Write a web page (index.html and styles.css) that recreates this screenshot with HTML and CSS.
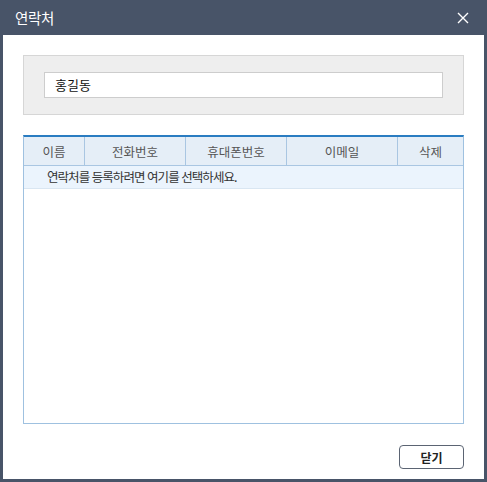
FILE: index.html
```html
<!DOCTYPE html>
<html lang="ko">
<head>
<meta charset="utf-8">
<title>연락처</title>
<link rel="stylesheet" href="styles.css">
</head>
<body>
<div class="window">
  <div class="titlebar">
    <span class="title">연락처</span>
    <svg class="close" width="12" height="12" viewBox="0 0 12 12"><path d="M1 1 L11 11 M11 1 L1 11" stroke="#ffffff" stroke-width="1.4" fill="none"/></svg>
  </div>
  <div class="content">
    <div class="search">
      <div class="input">홍길동</div>
    </div>
    <div class="table">
      <div class="thead">
        <div class="th">이름</div>
        <div class="th">전화번호</div>
        <div class="th">휴대폰번호</div>
        <div class="th">이메일</div>
        <div class="th">삭제</div>
      </div>
      <div class="row">연락처를 등록하려면 여기를 선택하세요.</div>
    </div>
    <div class="footer">
      <button class="btn">닫기</button>
    </div>
  </div>
</div>
</body>
</html>
```
FILE: styles.css
```css
html, body {
  margin: 0;
  padding: 0;
  background: #ffffff;
}
body {
  font-family: "Noto Sans CJK KR", "Noto Sans", sans-serif;
}
.window {
  width: 487px;
  height: 482px;
  box-sizing: border-box;
  background: #485468;
  padding: 0 3px 3px 3px;
  display: flex;
  flex-direction: column;
}
.titlebar {
  height: 35px;
  display: flex;
  align-items: center;
  justify-content: space-between;
  padding: 0 15px 0 12px;
  box-sizing: border-box;
}
.title {
  color: #ffffff;
  font-size: 14.5px;
  letter-spacing: -0.3px;
}
.close {
  display: block;
}
.content {
  flex: 1;
  background: #ffffff;
  padding: 20px 20px 10px 20px;
  display: flex;
  flex-direction: column;
}
.search {
  height: 60px;
  box-sizing: border-box;
  border: 1px solid #d6d6d6;
  background: #eeeeee;
  padding: 16px 20px 0 20px;
}
.input {
  height: 26px;
  box-sizing: border-box;
  border: 1px solid #cdcdcd;
  background: #ffffff;
  font-size: 13px;
  color: #111111;
  padding: 0 10px;
  line-height: 24px;
}
.table {
  margin-top: 20px;
  height: 289px;
  box-sizing: border-box;
  border: 1px solid #9fc1e0;
  border-top: 2px solid #2a7cc1;
  display: flex;
  flex-direction: column;
}
.thead {
  display: grid;
  grid-template-columns: 61px 101px 101px 111px 1fr;
  height: 29px;
  background: #e5eef7;
  border-bottom: 1px solid #a9c6e2;
  box-sizing: border-box;
}
.th {
  border-right: 1px solid #a9c6e2;
  display: flex;
  align-items: center;
  justify-content: center;
  font-size: 12.5px;
  color: #555555;
}
.th:last-child {
  border-right: none;
}
.row {
  height: 23px;
  box-sizing: border-box;
  background: #ebf4fd;
  border-bottom: 1px solid #d9e6f2;
  font-size: 12.5px;
  color: #333333;
  padding-left: 23px;
  line-height: 22px;
  letter-spacing: -0.95px;
}
.footer {
  margin-top: auto;
  display: flex;
  justify-content: flex-end;
}
.btn {
  width: 65px;
  height: 24px;
  border: 1px solid #5b6473;
  border-radius: 4px;
  background: #ffffff;
  font-family: "Noto Sans CJK KR", sans-serif;
  font-size: 12px;
  font-weight: 700;
  color: #222222;
  padding: 0;
}
```
